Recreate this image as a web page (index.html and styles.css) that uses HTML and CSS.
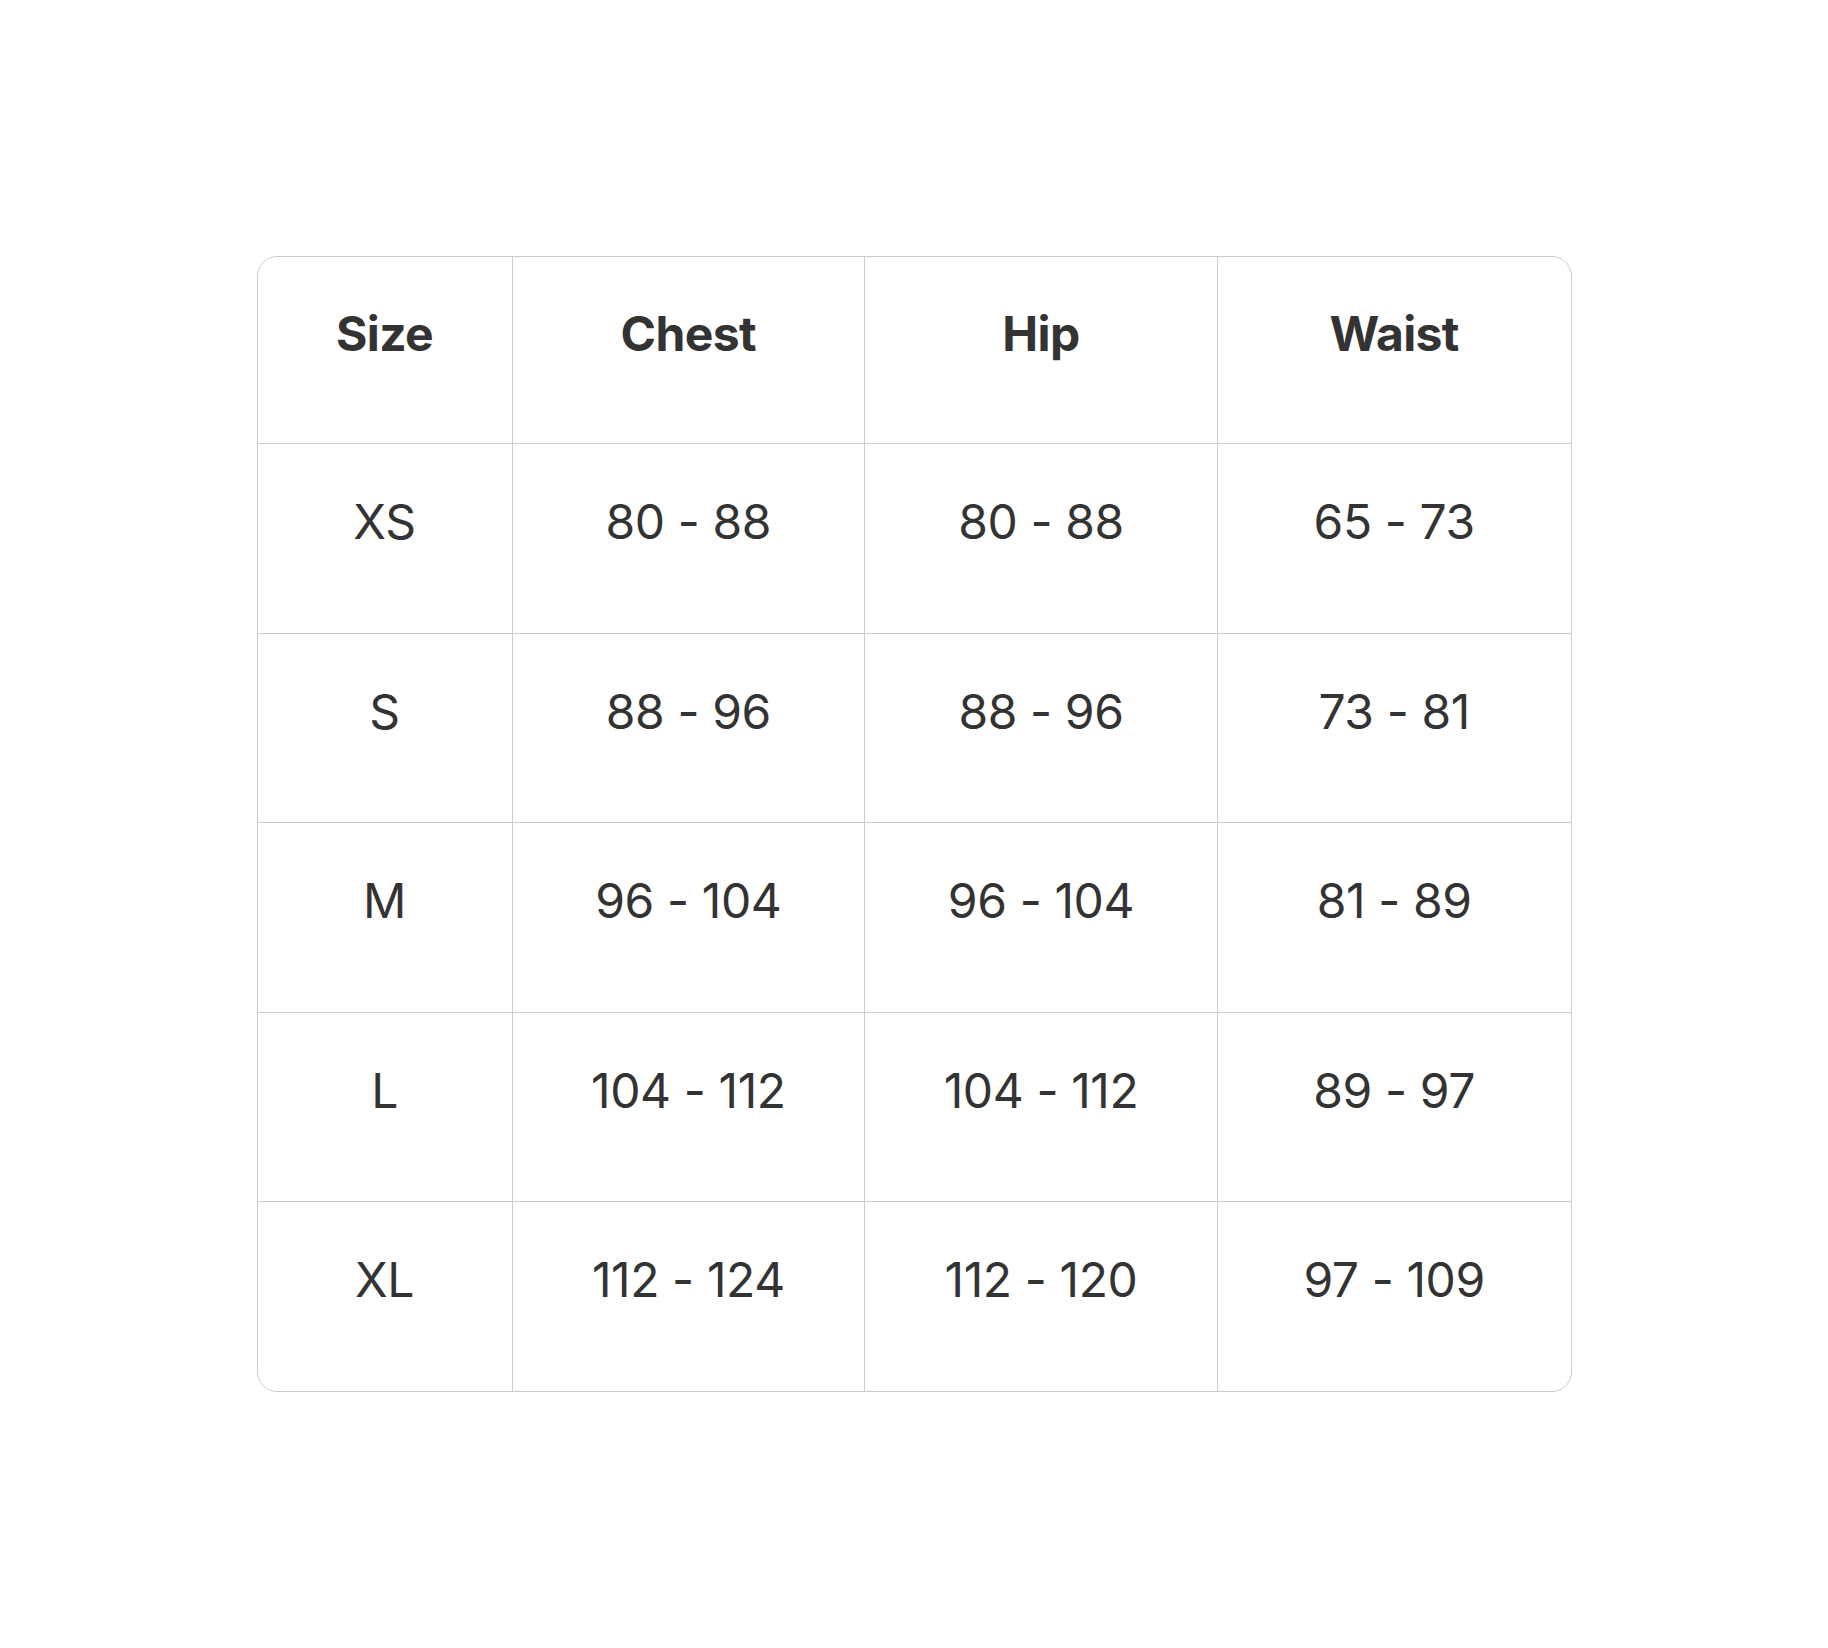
FILE: index.html
```html
<!DOCTYPE html>
<html lang="en">
<head>
<meta charset="utf-8">
<title>Size chart</title>
<link rel="stylesheet" href="styles.css">
</head>
<body>
<main class="page">
  <div class="chart">
    <table class="size-table">
      <thead>
        <tr><th class="c-size">Size</th><th>Chest</th><th>Hip</th><th>Waist</th></tr>
      </thead>
      <tbody>
        <tr><td class="c-size">XS</td><td>80 - 88</td><td>80 - 88</td><td>65 - 73</td></tr>
        <tr><td class="c-size">S</td><td>88 - 96</td><td>88 - 96</td><td>73 - 81</td></tr>
        <tr><td class="c-size">M</td><td>96 - 104</td><td>96 - 104</td><td>81 - 89</td></tr>
        <tr><td class="c-size">L</td><td>104 - 112</td><td>104 - 112</td><td>89 - 97</td></tr>
        <tr><td class="c-size">XL</td><td>112 - 124</td><td>112 - 120</td><td>97 - 109</td></tr>
      </tbody>
    </table>
  </div>
</main>
</body>
</html>
```

FILE: styles.css
```css
html, body {
  margin: 0;
  padding: 0;
  background: #ffffff;
}
.page {
  display: flex;
  justify-content: center;
  padding-top: 256px;
}
.chart {
  width: 1313px;
  border: 1px solid #cccccc;
  border-radius: 20px;
  overflow: hidden;
}
.size-table {
  width: 100%;
  border-collapse: separate;
  border-spacing: 0;
  table-layout: fixed;
  font-family: Inter, "Liberation Sans", sans-serif;
  font-size: 48px;
  line-height: 72px;
  letter-spacing: -0.4px;
  color: #333333;
}
.size-table th,
.size-table td {
  text-align: center;
  vertical-align: top;
  padding: 42px 8px 0;
  border-right: 1px solid #cccccc;
  border-bottom: 1px solid #cccccc;
  box-sizing: border-box;
}
.size-table th:last-child,
.size-table td:last-child {
  border-right: none;
}
.size-table tbody tr:last-child td {
  border-bottom: none;
}
.size-table th {
  font-weight: 700;
  height: 187px;
  padding-top: 41px;
  letter-spacing: -0.6px;
}
.size-table td {
  font-weight: 400;
  height: 189.5px;
}
.size-table tbody tr:last-child td {
  height: 189px;
}
.c-size {
  width: 255px;
}
```
